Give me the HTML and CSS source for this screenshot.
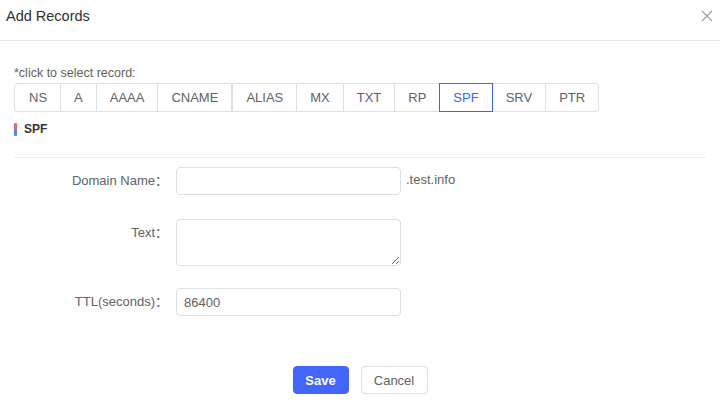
FILE: index.html
```html
<!DOCTYPE html>
<html>
<head>
<meta charset="utf-8">
<link rel="stylesheet" href="styles.css">
</head>
<body>
<div class="dialog">
  <div class="dialog-header">
    <span class="dialog-title">Add Records</span>
    <span class="dialog-close">
      <svg width="12" height="12" viewBox="0 0 12 12"><path d="M1 1 L11 11 M11 1 L1 11" stroke="#9a9a9a" stroke-width="1.1" fill="none"/></svg>
    </span>
  </div>
  <div class="dialog-body">
    <div class="hint">*click to select record:</div>
    <div class="type-group">
      <span class="type-btn">NS</span>
      <span class="type-btn">A</span>
      <span class="type-btn">AAAA</span>
      <span class="type-btn">CNAME</span>
      <span class="type-btn split">ALIAS</span>
      <span class="type-btn">MX</span>
      <span class="type-btn">TXT</span>
      <span class="type-btn">RP</span>
      <span class="type-btn active">SPF</span>
      <span class="type-btn">SRV</span>
      <span class="type-btn">PTR</span>
    </div>
    <div class="section-title"><span class="bar"></span>SPF</div>
    <div class="divider"></div>
    <form class="form">
      <div class="form-row row-domain">
        <label class="form-label">Domain Name：</label>
        <div class="form-control">
          <input class="input" type="text">
          <span class="suffix">.test.info</span>
        </div>
      </div>
      <div class="form-row row-text">
        <label class="form-label">Text：</label>
        <div class="form-control">
          <textarea class="textarea"></textarea>
        </div>
      </div>
      <div class="form-row">
        <label class="form-label">TTL(seconds)：</label>
        <div class="form-control">
          <input class="input" type="text" value="86400">
        </div>
      </div>
    </form>
    <div class="footer">
      <button class="btn btn-primary" type="button">Save</button>
      <button class="btn btn-default" type="button">Cancel</button>
    </div>
  </div>
</div>
</body>
</html>
```

FILE: styles.css
```css
html, body {
  margin: 0;
  padding: 0;
  background: #fff;
}
body {
  font-family: "Liberation Sans", Arial, "Noto Sans CJK SC", sans-serif;
  color: #606266;
  width: 720px;
  height: 404px;
  overflow: hidden;
}
.dialog-header {
  height: 41px;
  border-bottom: 1px solid #e8e8e8;
  display: flex;
  align-items: center;
  justify-content: space-between;
  padding: 0 7px 0 6px;
  box-sizing: border-box;
}
.dialog-title {
  font-size: 14.5px;
  color: #303133;
  margin-top: -8px;
}
.dialog-close {
  display: flex;
  margin-top: -8px;
}
.dialog-body {
  padding: 0 14px;
}
.hint {
  font-size: 12.5px;
  color: #5f5f5f;
  margin-top: 25px;
  line-height: 15px;
}
.type-group {
  display: flex;
  margin-top: 2px;
  width: max-content;
}
.type-btn {
  height: 29px;
  box-sizing: border-box;
  line-height: 27px;
  font-size: 13px;
  color: #606266;
  padding: 0 13px;
  border: 1px solid #dcdfe6;
  border-left: none;
  background: #fff;
}
.type-btn:first-child {
  border-left: 1px solid #dcdfe6;
  border-radius: 4px 0 0 4px;
  padding-left: 14px;
}
.type-btn:last-child {
  border-radius: 0 4px 4px 0;
}
.type-btn.split {
  border-left: 1px solid #dcdfe6;
}
.type-btn.active {
  border: 1px solid #3a66f5;
  color: #3a66f5;
  margin-left: -1px;
}
.section-title {
  display: flex;
  align-items: center;
  margin-top: 10px;
  font-size: 12px;
  font-weight: bold;
  color: #333;
  height: 14px;
}
.bar {
  width: 3px;
  height: 13px;
  background: linear-gradient(#f5616b 0%, #f5616b 45%, #4a8af4 55%, #4a8af4 100%);
  margin-right: 7px;
  border-radius: 1px;
}
.divider {
  height: 1px;
  background: #ebeef5;
  margin-top: 21px;
}
.form {
  margin: 9px 0 0 0;
}
.form-row {
  display: flex;
  align-items: flex-start;
  margin-bottom: 22px;
}
.row-domain {
  margin-bottom: 24px;
}
.form-label {
  width: 162px;
  box-sizing: border-box;
  text-align: right;
  padding-right: 8px;
  font-size: 13px;
  line-height: 28px;
  color: #606266;
}
.form-control {
  display: flex;
  align-items: center;
}
.input {
  width: 225px;
  height: 28px;
  box-sizing: border-box;
  border: 1px solid #dcdfe6;
  border-radius: 4px;
  padding: 0 7px;
  font-family: inherit;
  font-size: 13px;
  color: #606266;
  outline: none;
  margin: 0;
}
.suffix {
  font-size: 13px;
  color: #606266;
  margin-left: 5px;
  margin-top: -3px;
}
.textarea {
  width: 225px;
  height: 47px;
  box-sizing: border-box;
  border: 1px solid #dcdfe6;
  border-radius: 4px;
  padding: 5px 7px;
  font-family: inherit;
  font-size: 13px;
  margin: 0;
  display: block;
  resize: both;
}
.footer {
  display: flex;
  justify-content: center;
  gap: 12px;
  margin-top: 50px;
}
.btn {
  height: 28px;
  box-sizing: border-box;
  border-radius: 4px;
  font-family: inherit;
  font-size: 13px;
  padding: 0;
  margin: 0;
}
.btn-primary {
  width: 56px;
  background: #4266f9;
  border: 1px solid #4266f9;
  color: #fff;
  font-weight: bold;
}
.btn-default {
  width: 67px;
  background: #fff;
  border: 1px solid #dcdfe6;
  color: #606266;
}
```
